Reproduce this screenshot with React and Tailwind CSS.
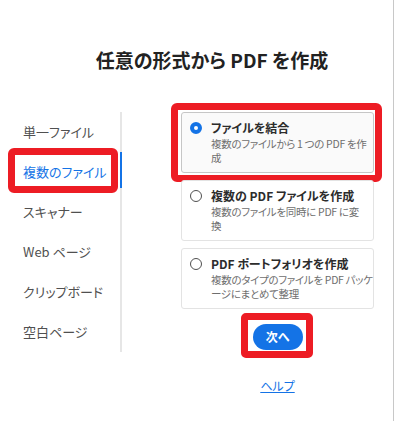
import React from "react";

const F = { fontFamily: '"Noto Sans CJK JP", "Noto Sans", sans-serif' };

function Radio({ checked }) {
  return checked ? (
    <span className="mt-[2px] block h-[12px] w-[12px] shrink-0 rounded-full border-[4px] border-[#1473e6] bg-white" />
  ) : (
    <span className="mt-[2px] block h-[12px] w-[12px] shrink-0 rounded-full border-[1.5px] border-[#505050] bg-white" />
  );
}

function Card({ checked, title, lines }) {
  return (
    <div className="relative">
      <div
        className={
          "flex gap-[9px] rounded-[3px] border pl-[8px] pr-[6px] pt-[7px] pb-[7px] " +
          (checked ? "border-[#c6c6c6] bg-[#fafafa]" : "border-[#e3e3e3] bg-white")
        }
      >
        <Radio checked={checked} />
        <div className="flex-1">
          <div className="text-[12px] font-bold leading-[16px] text-[#2c2c2c]">{title}</div>
          <div className="mt-[1px] text-[10.5px] leading-[14px] text-[#6e6e6e] whitespace-nowrap tracking-[-0.3px]">
            <div>{lines[0]}</div>
            <div>{lines[1]}</div>
          </div>
        </div>
      </div>
      {checked && (
        <span className="pointer-events-none absolute -top-[9px] -bottom-[9px] -left-[10px] -right-[8px] rounded-[6px] border-[7px] border-[#ed1c24]" />
      )}
    </div>
  );
}

export default function App() {
  const nav = ["単一ファイル", "複数のファイル", "スキャナー", "Web ページ", "クリップボード", "空白ページ"];
  return (
    <div
      style={F}
      className="relative h-[421px] w-[395px] overflow-hidden bg-white [font-feature-settings:'palt']"
    >
      <div className="h-full w-[394px] border-r border-[#c8c8c8]">
        <div className="pt-[47px] pl-[31px] text-center text-[19px] font-bold leading-[26px] text-[#222]">
          任意の形式から PDF を作成
        </div>
        <div className="mt-[39px] flex items-start">
          <div className="w-[123px] border-r-2 border-[#e6e6e6]">
            {nav.map((n, i) => (
              <div key={n} className="relative flex h-[40px] items-center">
                <span className={"pl-[23px] text-[13px] " + (i === 1 ? "text-[#1473e6]" : "text-[#505050]")}>{n}</span>
                {i === 1 && (
                  <>
                    <span className="absolute top-0 right-[-2px] h-[36px] w-[2px] bg-[#1473e6]" />
                    <span className="pointer-events-none absolute left-[8px] top-[-4px] h-[45px] w-[110px] rounded-[6px] border-[7px] border-[#ed1c24]" />
                  </>
                )}
              </div>
            ))}
          </div>
          <div className="flex w-[271px] flex-col pl-[59px] pr-[19px]">
            <div className="flex flex-col gap-[7px]">
              <Card checked title="ファイルを結合" lines={["複数のファイルから 1 つの PDF を作", "成"]} />
              <Card title="複数の PDF ファイルを作成" lines={["複数のファイルを同時に PDF に変", "換"]} />
              <Card title="PDF ポートフォリオを作成" lines={["複数のタイプのファイルを PDF パッケ", "ージにまとめて整理"]} />
            </div>
            <div className="mt-[15px] flex justify-center">
              <div className="relative">
                <button className="block h-[26px] w-[50px] rounded-full bg-[#1473e6] text-[12px] font-bold text-white">
                  次へ
                </button>
                <span className="pointer-events-none absolute -top-[11px] -bottom-[8px] -left-[12px] -right-[10px] rounded-[5px] border-[7px] border-[#ed1c24]" />
              </div>
            </div>
            <div className="mt-[27px] text-center leading-[14px]">
              <span className="text-[12px] leading-[14px] text-[#1473e6] underline">ヘルプ</span>
            </div>
          </div>
        </div>
      </div>
    </div>
  );
}
